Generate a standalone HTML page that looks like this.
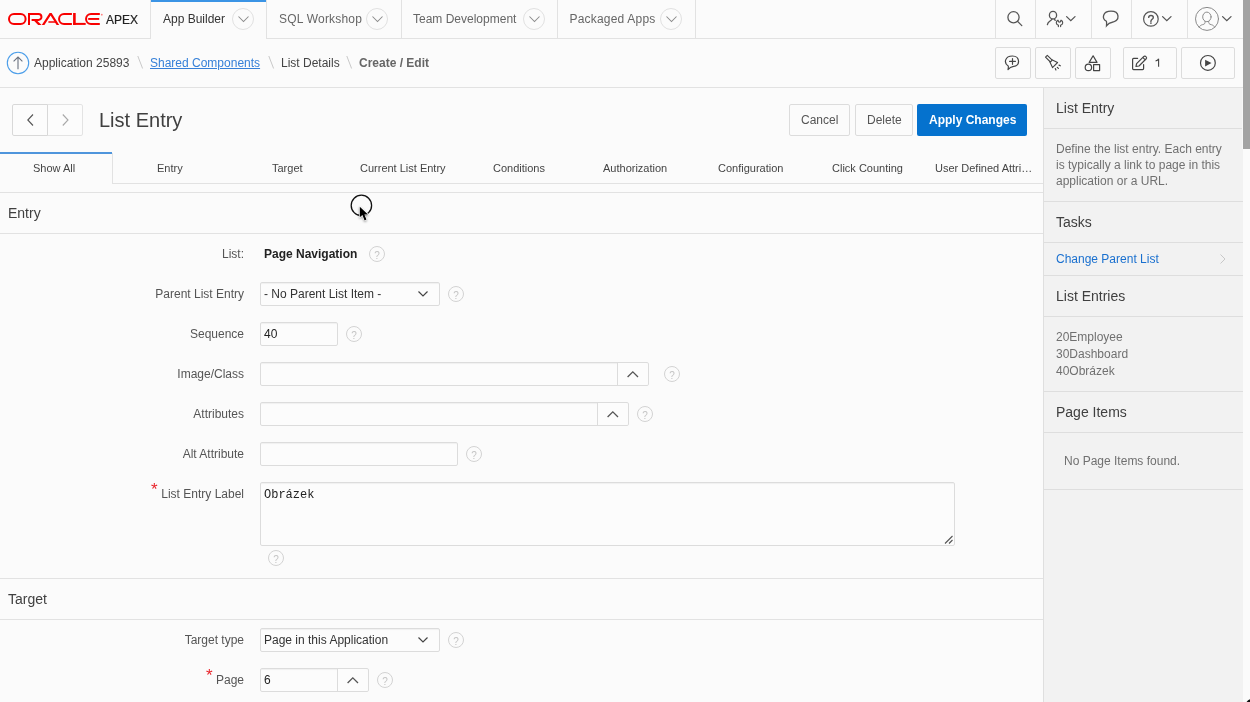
<!DOCTYPE html>
<html><head><meta charset="utf-8">
<style>
*{box-sizing:border-box;margin:0;padding:0}
html,body{width:1250px;height:702px;overflow:hidden}
body{background:#fbfbfb;font-family:"Liberation Sans",sans-serif;font-size:12px;color:#404040;position:relative}
.a{position:absolute}
.t{position:absolute;white-space:nowrap;line-height:16px}
.hl{position:absolute;height:1px;background:#e2e2e2}
.vl{position:absolute;width:1px;background:#e2e2e2}
.circ{position:absolute;border-radius:50%}
svg{position:absolute;overflow:visible}
.inp{position:absolute;border:1px solid #dcdcdc;border-radius:2px;background:#fcfcfc;box-shadow:inset 0 2px 1px -1px rgba(0,0,0,.05)}
.help{position:absolute;width:16px;height:16px;border:1px solid #d2d2d2;border-radius:50%;color:#c4c4c4;font-size:10px;line-height:17px;text-align:center}
.lbl{position:absolute;right:1006px;white-space:nowrap;line-height:16px;color:#555;font-size:12px;text-align:right}
.btn{position:absolute;border:1px solid #dcdcdc;border-radius:2px;background:#fbfbfb}
.side{position:absolute;left:1043px;top:87px;width:200px;height:615px;background:#f2f2f2;border-left:1px solid #dfdfdf;border-top:1px solid #e2e2e2}
</style></head>
<body><div style="position:absolute;left:0;top:0;width:1250px;height:702px;will-change:transform">
<!-- TOP NAV -->
<div class="hl" style="left:0;top:38px;width:151px"></div>
<div class="hl" style="left:267px;top:38px;width:976px"></div>
<div class="vl" style="left:150px;top:0;height:39px"></div>
<div class="a" style="left:151px;top:0;width:115px;height:2px;background:#3b94e5"></div>
<div class="vl" style="left:266px;top:0;height:39px"></div>
<div class="vl" style="left:401px;top:0;height:39px"></div>
<div class="vl" style="left:557px;top:0;height:39px"></div>
<div class="vl" style="left:695px;top:0;height:39px"></div>
<!-- logo -->
<svg style="left:0;top:0" width="150" height="38">
<g fill="none" stroke="#f80000" stroke-width="2">
<rect x="9" y="14" width="16.6" height="9.9" rx="4.95"/>
<path d="M29 13 V24.9 M28 14 H38.5 A2.95 2.95 0 0 1 38.5 19.9 H31.6"/>
<path d="M71.9 14 H64 A4.95 4.95 0 0 0 64 23.9 H71.9"/>
<path d="M99.8 14 H91 A4.95 4.95 0 0 0 91 23.9 H99.8"/>
</g>
<g fill="#f80000">
<polygon points="32.5,19.2 35.6,19.2 41.6,24.9 38.2,24.9"/>
<polygon points="41.8,24.9 49.6,13 51.6,13 59.2,24.9 56.6,24.9 50.6,15.6 44.4,24.9"/>
<polygon points="48.4,21.2 55.2,21.2 56.2,22.8 48.4,22.8"/>
<rect x="73.1" y="13" width="2.6" height="11.9"/>
<rect x="73.1" y="22.9" width="12.6" height="2"/>
<rect x="88.2" y="18" width="11" height="1.9"/>
<circle cx="101.8" cy="14.7" r="0.9" fill="#ff8080"/>
</g>
</svg>
<div class="t" style="left:106px;top:12px;font-size:12px;color:#222;transform:scaleY(1.05);-webkit-text-stroke:0.2px #222">APEX</div>

<div class="t" style="left:163px;top:11px;color:#333">App Builder</div>
<div class="circ" style="left:232px;top:8px;width:22px;height:22px;border:1px solid #e0e0e0"></div>
<svg style="left:238px;top:16px" width="11" height="7"><path d="M0.5 0.5 L5.5 5.5 L10.5 0.5" fill="none" stroke="#8a8a8a" stroke-width="1.05"/></svg>

<div class="t" style="left:279px;top:11px;color:#666;letter-spacing:0.2px">SQL Workshop</div>
<div class="circ" style="left:366px;top:8px;width:22px;height:22px;border:1px solid #e0e0e0"></div>
<svg style="left:372px;top:16px" width="11" height="7"><path d="M0.5 0.5 L5.5 5.5 L10.5 0.5" fill="none" stroke="#8a8a8a" stroke-width="1.05"/></svg>

<div class="t" style="left:413px;top:11px;color:#666">Team Development</div>
<div class="circ" style="left:523px;top:8px;width:22px;height:22px;border:1px solid #e0e0e0"></div>
<svg style="left:529px;top:16px" width="11" height="7"><path d="M0.5 0.5 L5.5 5.5 L10.5 0.5" fill="none" stroke="#8a8a8a" stroke-width="1.05"/></svg>

<div class="t" style="left:569.5px;top:11px;color:#666;letter-spacing:0.2px">Packaged Apps</div>
<div class="circ" style="left:660px;top:8px;width:22px;height:22px;border:1px solid #e0e0e0"></div>
<svg style="left:666px;top:16px" width="11" height="7"><path d="M0.5 0.5 L5.5 5.5 L10.5 0.5" fill="none" stroke="#8a8a8a" stroke-width="1.05"/></svg>

<!-- right nav icons -->
<div class="vl" style="left:995px;top:0;height:39px"></div>
<div class="vl" style="left:1035px;top:0;height:39px"></div>
<div class="vl" style="left:1091px;top:0;height:39px"></div>
<div class="vl" style="left:1131px;top:0;height:39px"></div>
<div class="vl" style="left:1187px;top:0;height:39px"></div>

<svg style="left:0;top:0" width="1243" height="90">
<g fill="none" stroke="#555" stroke-width="1.3" stroke-linecap="round">
<circle cx="1013.5" cy="17.3" r="5.6"/>
<path d="M1017.6 21.4 L1021.8 25.6"/>
<ellipse cx="1053" cy="15.2" rx="3.6" ry="3.8"/>
<path d="M1051.8 19.2 C1051 21.2 1048 21.2 1047.4 24.6"/>
<path d="M1054.6 19.4 L1055.2 20.4"/>
<path d="M1057.8 20.4 C1055.6 21.6 1055.8 24.4 1058.4 25.2 V26.6 M1061.2 20.4 C1063.4 21.6 1063.2 24.4 1060.6 25.2 V26.6 M1058.2 20.4 C1058.2 22.6 1060.8 22.6 1060.8 20.4" stroke-width="1.2"/>
<path d="M1066.6 16.6 L1070.8 20.6 L1075 16.6"/>
<path d="M1106.4 21.2 C1101.5 18.5 1102.5 11.2 1111 11.2 C1119.5 11.2 1121 20.5 1111.5 22.5 C1110 22.6 1108.5 23.5 1106.5 25.8 C1106.6 24.5 1106.8 22.2 1106.4 21.2 Z"/>
<circle cx="1150.9" cy="18.9" r="7.3" stroke-width="1.2"/>
<path d="M1148.7 17.4 C1148.7 14.8 1153.3 14.8 1153.3 17.4 C1153.3 19.2 1150.9 19.5 1150.9 21.4" stroke-width="1.4"/>
<path d="M1162.6 16.6 L1166.8 20.6 L1171 16.6"/>
<circle cx="1207" cy="18.9" r="11.5" stroke="#8a8a8a" stroke-width="1"/>
<ellipse cx="1206.9" cy="16.9" rx="4.2" ry="4.8" stroke="#8a8a8a" stroke-width="1"/>
<path d="M1205.1 21.3 C1205.3 23.4 1204.8 24.2 1202.4 24.7 C1200.8 25.1 1199.8 25.8 1199.2 27.2 M1208.7 21.3 C1208.5 23.4 1209 24.2 1211.4 24.7 C1213 25.1 1214 25.8 1214.6 27.2" stroke="#8a8a8a" stroke-width="1"/>
<path d="M1222.6 16.6 L1226.8 20.6 L1231 16.6"/>
</g>
<rect x="1150.1" y="22.4" width="1.6" height="1.4" fill="#555"/>
</svg>
<!-- BREADCRUMB -->
<div class="hl" style="left:0;top:87px;width:1043px"></div>
<svg style="left:0;top:40px" width="40" height="48"><circle cx="18" cy="23" r="10.7" fill="none" stroke="#4a9de9" stroke-width="1.1"/><path d="M18 29.2 V17 M13.6 21.4 L18 17 L22.4 21.4" fill="none" stroke="#6a7280" stroke-width="1.1"/></svg>
<svg style="left:0;top:50px" width="400" height="25"><path d="M137.8 6 L142.6 18.5 M268.8 6 L273.6 18.5 M346.8 6 L351.6 18.5" stroke="#c8c8c8" stroke-width="1"/></svg>
<div class="t" style="left:34px;top:55px;color:#444">Application 25893</div>
<div class="t" style="left:150px;top:55px;color:#3680d8;text-decoration:underline">Shared Components</div>
<div class="t" style="left:281px;top:55px;color:#444">List Details</div>
<div class="t" style="left:359px;top:55px;color:#666;font-weight:bold">Create / Edit</div>

<div class="btn" style="left:995px;top:47px;width:36px;height:32px"></div>
<div class="btn" style="left:1035px;top:47px;width:36px;height:32px"></div>
<div class="btn" style="left:1075px;top:47px;width:36px;height:32px"></div>
<div class="btn" style="left:1123px;top:47px;width:54px;height:32px"></div>
<div class="btn" style="left:1181px;top:47px;width:54px;height:32px"></div>
<svg style="left:0;top:0" width="1243" height="90">
<g fill="none" stroke="#444" stroke-width="1.2" stroke-linecap="round" stroke-linejoin="round">
<path d="M1008.2 66 C1003.5 63 1004.8 56 1012.5 56 C1020 56 1021 65.8 1012.8 66.6 C1011.2 66.8 1009.8 67.6 1008 69.6 C1008.3 68.2 1008.5 66.6 1008.2 66 Z"/>
<path d="M1009.6 61.4 H1015.4 M1012.5 58.5 V64.3"/>
<path d="M1047.3 55.3 L1052.2 60.2 L1050.4 62 L1045.5 57.1 Z" stroke-width="1.1"/>
<path d="M1051.8 59.8 L1057.6 62.5 L1052.5 67.6 L1049.8 61.8" stroke-width="1.1"/>
<path d="M1059 65.1 L1060.3 65.8 M1057.3 67.3 L1058.4 68.4 M1055.3 68.6 L1055.9 69.9" stroke-width="1.2"/>
<path d="M1093.1 55.8 L1097 62.4 L1089.2 62.4 Z"/>
<circle cx="1088.4" cy="67.4" r="3.2"/>
<rect x="1093.6" y="64.6" width="6" height="6"/>
<path d="M1137.6 58.4 H1133.6 C1132.9 58.4 1132.6 58.7 1132.6 59.4 V68.6 C1132.6 69.3 1132.9 69.6 1133.6 69.6 H1142.6 C1143.3 69.6 1143.6 69.3 1143.6 68.6 V64.6"/>
<path d="M1136 66.4 L1136.6 63.6 L1143.6 56.6 C1144.3 55.9 1145.4 55.9 1146 56.6 C1146.7 57.3 1146.7 58.3 1146 59 L1139 66 Z M1142.8 57.4 L1145.2 59.8"/>
<circle cx="1207.9" cy="62.9" r="7.4"/>
</g>
<path d="M1205.1 59.7 L1211.5 63.1 L1205.1 66.6 Z" fill="#444"/>
</svg>
<svg style="left:0;top:0" width="1243" height="90"><path d="M1158.6 58.8 V66.8 M1158.6 58.8 C1158 60.2 1156.8 60.8 1155.6 60.9" fill="none" stroke="#444" stroke-width="1.1"/></svg>

<!-- TITLE -->
<div class="a" style="left:47px;top:104px;width:36px;height:32px;border:1px solid #e3e3e3;border-radius:0 2px 2px 0;background:#fcfcfc"></div>
<div class="a" style="left:12px;top:104px;width:36px;height:32px;border:1px solid #d8d8d8;border-radius:2px 0 0 2px;background:#fcfcfc"></div>
<svg style="left:27px;top:114px" width="7" height="12"><path d="M6 0.5 L0.8 6 L6 11.5" fill="none" stroke="#555" stroke-width="1.1"/></svg>
<svg style="left:61.5px;top:114px" width="7" height="12"><path d="M0.8 0.5 L6 6 L0.8 11.5" fill="none" stroke="#a8a8a8" stroke-width="1.1"/></svg>
<div class="t" style="left:99px;top:108px;font-size:20px;line-height:24px;color:#404040">List Entry</div>

<div class="btn" style="left:789px;top:104px;width:61px;height:32px"></div>
<div class="t" style="left:801px;top:112px;color:#555">Cancel</div>
<div class="btn" style="left:855px;top:104px;width:58px;height:32px"></div>
<div class="t" style="left:867px;top:112px;color:#555">Delete</div>
<div class="a" style="left:917px;top:104px;width:110px;height:32px;background:#0572ce;border-radius:2px"></div>
<div class="t" style="left:929px;top:112px;color:#fff;font-weight:bold">Apply Changes</div>

<!-- TABS -->
<div class="a" style="left:0;top:152px;width:112px;height:2px;background:#4f95dc"></div>
<div class="vl" style="left:112px;top:153px;height:31px"></div>
<div class="hl" style="left:112px;top:183px;width:931px"></div>
<div class="hl" style="left:0;top:192px;width:1043px"></div>
<div class="t" style="left:33px;top:160px;font-size:11px;color:#444">Show All</div>
<div class="t" style="left:157px;top:160px;font-size:11px;color:#444">Entry</div>
<div class="t" style="left:272px;top:160px;font-size:11px;color:#444">Target</div>
<div class="t" style="left:360px;top:160px;font-size:11px;color:#444">Current List Entry</div>
<div class="t" style="left:493px;top:160px;font-size:11px;color:#444">Conditions</div>
<div class="t" style="left:603px;top:160px;font-size:11px;color:#444">Authorization</div>
<div class="t" style="left:718px;top:160px;font-size:11px;color:#444">Configuration</div>
<div class="t" style="left:832px;top:160px;font-size:11px;color:#444">Click Counting</div>
<div class="t" style="left:935px;top:160px;font-size:11px;color:#444">User Defined Attri…</div>

<!-- ENTRY REGION -->
<div class="t" style="left:8px;top:205px;font-size:14px;line-height:16px;color:#404040">Entry</div>
<div class="hl" style="left:0;top:233px;width:1043px"></div>

<!-- FORM -->
<div class="lbl" style="top:246px">List:</div>
<div class="t" style="left:264px;top:246px;font-weight:bold;color:#222">Page Navigation</div>
<div class="help" style="left:369px;top:246px">?</div>

<div class="lbl" style="top:286px">Parent List Entry</div>
<div class="inp" style="left:260px;top:282px;width:180px;height:24px"></div>
<div class="t" style="left:264px;top:286px;color:#333">- No Parent List Item -</div>
<svg style="left:418px;top:291px" width="10" height="6"><path d="M0.5 0.5 L5 5 L9.5 0.5" fill="none" stroke="#444" stroke-width="1.2"/></svg>
<div class="help" style="left:448px;top:286px">?</div>

<div class="lbl" style="top:326px">Sequence</div>
<div class="inp" style="left:260px;top:322px;width:78px;height:24px"></div>
<div class="t" style="left:264px;top:326px;color:#222">40</div>
<div class="help" style="left:346px;top:326px">?</div>

<div class="lbl" style="top:366px">Image/Class</div>
<div class="inp" style="left:260px;top:362px;width:389px;height:24px"></div>
<div class="a" style="left:618px;top:363px;width:30px;height:22px;background:#fcfcfc;border-radius:0 2px 2px 0"></div><div class="vl" style="left:617px;top:363px;height:22px;background:#dcdcdc"></div>
<svg style="left:627px;top:371px" width="12" height="7"><path d="M0.6 6 L5.8 0.8 L11 6" fill="none" stroke="#555" stroke-width="1.3"/></svg>
<div class="help" style="left:664px;top:366px">?</div>

<div class="lbl" style="top:406px">Attributes</div>
<div class="inp" style="left:260px;top:402px;width:369px;height:24px"></div>
<div class="a" style="left:598px;top:403px;width:30px;height:22px;background:#fcfcfc;border-radius:0 2px 2px 0"></div><div class="vl" style="left:597px;top:403px;height:22px;background:#dcdcdc"></div>
<svg style="left:607px;top:411px" width="12" height="7"><path d="M0.6 6 L5.8 0.8 L11 6" fill="none" stroke="#555" stroke-width="1.3"/></svg>
<div class="help" style="left:637px;top:406px">?</div>

<div class="lbl" style="top:446px">Alt Attribute</div>
<div class="inp" style="left:260px;top:442px;width:198px;height:24px"></div>
<div class="help" style="left:466px;top:446px">?</div>

<div class="lbl" style="top:486px">List Entry Label</div>
<div class="t" style="left:151px;top:481px;color:#e8242b;font-size:17px;line-height:18px">*</div>
<div class="inp" style="left:260px;top:482px;width:695px;height:64px"></div>
<div class="t" style="left:264px;top:487px;color:#222;font-family:'Liberation Mono',monospace">Obrázek</div>
<svg style="left:944px;top:535px" width="10" height="10"><path d="M1 8.5 L8.5 1 M5 8.5 L8.5 5" stroke="#555" stroke-width="1.1"/></svg>
<div class="help" style="left:268px;top:550px">?</div>

<div class="hl" style="left:0;top:578px;width:1043px"></div>
<div class="t" style="left:8px;top:591px;font-size:14px;color:#404040">Target</div>
<div class="hl" style="left:0;top:619px;width:1043px"></div>

<div class="lbl" style="top:632px">Target type</div>
<div class="inp" style="left:260px;top:628px;width:180px;height:24px"></div>
<div class="t" style="left:264px;top:632px;color:#333">Page in this Application</div>
<svg style="left:418px;top:637px" width="10" height="6"><path d="M0.5 0.5 L5 5 L9.5 0.5" fill="none" stroke="#444" stroke-width="1.2"/></svg>
<div class="help" style="left:448px;top:632px">?</div>

<div class="lbl" style="top:672px">Page</div>
<div class="t" style="left:206px;top:667px;color:#e8242b;font-size:17px;line-height:18px">*</div>
<div class="inp" style="left:260px;top:668px;width:109px;height:24px"></div>
<div class="a" style="left:338px;top:669px;width:30px;height:22px;background:#fcfcfc;border-radius:0 2px 2px 0"></div><div class="vl" style="left:337px;top:669px;height:22px;background:#dcdcdc"></div>
<svg style="left:347px;top:677px" width="12" height="7"><path d="M0.6 6 L5.8 0.8 L11 6" fill="none" stroke="#555" stroke-width="1.3"/></svg>
<div class="t" style="left:264px;top:672px;color:#222">6</div>
<div class="help" style="left:377px;top:672px">?</div>

<!-- SIDE PANEL -->
<div class="side"></div>
<div class="t" style="left:1056px;top:100px;font-size:14px;color:#404040">List Entry</div>
<div class="hl" style="left:1044px;top:128px;width:199px;background:#dedede"></div>
<div class="a" style="left:1056px;top:141px;width:172px;line-height:16px;color:#707070">Define the list entry. Each entry is typically a link to page in this application or a URL.</div>
<div class="hl" style="left:1044px;top:201px;width:199px;background:#dedede"></div>
<div class="t" style="left:1056px;top:214px;font-size:14px;color:#404040">Tasks</div>
<div class="hl" style="left:1044px;top:242px;width:199px;background:#dedede"></div>
<div class="t" style="left:1056px;top:251px;color:#1a70cf">Change Parent List</div>
<svg style="left:1220px;top:254px" width="6" height="10"><path d="M0.5 0.5 L5 5 L0.5 9.5" fill="none" stroke="#c8c8c8" stroke-width="1"/></svg>
<div class="hl" style="left:1044px;top:275px;width:199px;background:#dedede"></div>
<div class="t" style="left:1056px;top:288px;font-size:14px;color:#404040">List Entries</div>
<div class="hl" style="left:1044px;top:316px;width:199px;background:#dedede"></div>
<div class="t" style="left:1056px;top:329px;color:#707070">20Employee</div>
<div class="t" style="left:1056px;top:346px;color:#707070">30Dashboard</div>
<div class="t" style="left:1056px;top:363px;color:#707070">40Obrázek</div>
<div class="hl" style="left:1044px;top:391px;width:199px;background:#dedede"></div>
<div class="t" style="left:1056px;top:404px;font-size:14px;color:#404040">Page Items</div>
<div class="hl" style="left:1044px;top:432px;width:199px;background:#dedede"></div>
<div class="t" style="left:1064px;top:453px;color:#707070">No Page Items found.</div>
<div class="hl" style="left:1044px;top:489px;width:199px;background:#dedede"></div>
<!-- scrollbar -->
<div class="a" style="left:1243px;top:0;width:7px;height:702px;background:#fbfbfb"></div>
<div class="a" style="left:1242px;top:88px;width:1px;height:61px;background:#f8f8f8"></div>
<div class="a" style="left:1243px;top:0;width:7px;height:149px;background:#a3a3a3"></div>

<!-- cursor -->
<svg style="left:340px;top:185px" width="40" height="45">
<circle cx="21.4" cy="20.4" r="10.2" fill="none" stroke="#111" stroke-width="1.3"/>
<g transform="translate(19.8,21.8)">
<path d="M0 0 L0 10.5 L2.6 8.2 L4.8 13.6 L6.6 12.8 L4.6 7.6 L8.2 7.6 Z" fill="#000" stroke="#fff" stroke-width="1.2" stroke-linejoin="round" paint-order="stroke" style="filter:drop-shadow(0.5px 1px 0.8px rgba(0,0,0,.35))"/>
</g>
</svg>
<svg style="left:1244px;top:696px" width="6" height="6"><path d="M6 3.2 L6 6 L2.6 6 C3.6 4.6 4.6 3.7 6 3.2 Z" fill="#111"/></svg>
</div></body></html>
